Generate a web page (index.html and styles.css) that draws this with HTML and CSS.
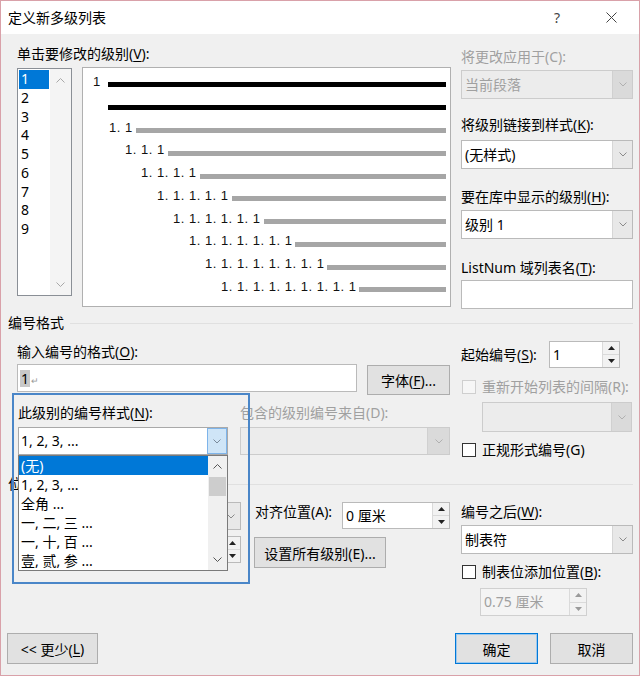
FILE: index.html
```html
<!DOCTYPE html>
<html lang="zh-CN">
<head>
<meta charset="utf-8">
<title>定义新多级列表</title>
<link rel="stylesheet" href="styles.css">
</head>
<body>
<div class="window">
  <div class="titlebar">
    <span class="title">定义新多级列表</span>
    <span class="tb-btn">?</span>
    <span class="tb-btn"><svg width="11" height="11" viewBox="0 0 11 11"><path d="M0.5 0.5L10.5 10.5M10.5 0.5L0.5 10.5" stroke="#444" stroke-width="1"/></svg></span>
  </div>

  <div class="content">
    <div class="top">
      <div class="top-left">
        <div class="lbl">单击要修改的级别(<u>V</u>):</div>
        <div class="top-row">
          <div class="levels">
            <div class="level-items">
              <div class="level selected">1</div>
              <div class="level">2</div>
              <div class="level">3</div>
              <div class="level">4</div>
              <div class="level">5</div>
              <div class="level">6</div>
              <div class="level">7</div>
              <div class="level">8</div>
              <div class="level">9</div>
            </div>
            <div class="lscroll">
              <svg width="9" height="5" viewBox="0 0 9 5"><path d="M0.5 4.5L4.5 0.5L8.5 4.5" fill="none" stroke="#a8a8a8"/></svg>
              <svg width="9" height="5" viewBox="0 0 9 5"><path d="M0.5 0.5L4.5 4.5L8.5 0.5" fill="none" stroke="#a8a8a8"/></svg>
            </div>
          </div>
          <div class="preview">
            <div class="pv-row lv1"><span class="num">1</span><i class="bar dark"></i></div>
            <div class="pv-row lv1b"><i class="bar dark"></i></div>
            <div class="pv-row lv2"><span class="num">1. 1</span><i class="bar"></i></div>
            <div class="pv-row lv3"><span class="num">1. 1. 1</span><i class="bar"></i></div>
            <div class="pv-row lv4"><span class="num">1. 1. 1. 1</span><i class="bar"></i></div>
            <div class="pv-row lv5"><span class="num">1. 1. 1. 1. 1</span><i class="bar"></i></div>
            <div class="pv-row lv6"><span class="num">1. 1. 1. 1. 1. 1</span><i class="bar"></i></div>
            <div class="pv-row lv7"><span class="num">1. 1. 1. 1. 1. 1. 1</span><i class="bar"></i></div>
            <div class="pv-row lv8"><span class="num">1. 1. 1. 1. 1. 1. 1. 1</span><i class="bar"></i></div>
            <div class="pv-row lv9"><span class="num">1. 1. 1. 1. 1. 1. 1. 1. 1</span><i class="bar"></i></div>
          </div>
        </div>
      </div>

      <div class="top-right">
        <div class="lbl dis apply-lbl">将更改应用于(C):</div>
        <div class="combo disabled apply-combo"><span class="val">当前段落</span><span class="cbtn"><svg width="8" height="5" viewBox="0 0 8 5"><path d="M0.5 0.5L4 4L7.5 0.5" fill="none" stroke="#b0b0b0"/></svg></span></div>
        <div class="lbl link-lbl">将级别链接到样式(<u>K</u>):</div>
        <div class="combo link-combo"><span class="val">(无样式)</span><span class="cbtn"><svg width="8" height="5" viewBox="0 0 8 5"><path d="M0.5 0.5L4 4L7.5 0.5" fill="none" stroke="#8a8a8a"/></svg></span></div>
        <div class="lbl gal-lbl">要在库中显示的级别(<u>H</u>):</div>
        <div class="combo gal-combo"><span class="val">级别 1</span><span class="cbtn"><svg width="8" height="5" viewBox="0 0 8 5"><path d="M0.5 0.5L4 4L7.5 0.5" fill="none" stroke="#8a8a8a"/></svg></span></div>
        <div class="lbl ln-lbl">ListNum 域列表名(<u>T</u>):</div>
        <div class="textbox ln-input"></div>
      </div>
    </div>

    <div class="group-head head-format"><span>编号格式</span><i class="rule"></i></div>

    <div class="sec sec1">
      <div class="sec1-left">
        <div class="lbl fmt-lbl">输入编号的格式(<u>O</u>):</div>
        <div class="fmt-row">
          <div class="textbox fmt-input"><span class="sel">1</span><span class="ret">↵</span></div>
          <div class="btn font-btn">字体(<u>F</u>)...</div>
        </div>
        <div class="two-col style-lbls">
          <div class="lbl">此级别的编号样式(<u>N</u>):</div>
          <div class="lbl dis">包含的级别编号来自(D):</div>
        </div>
        <div class="two-col style-combos">
          <div class="combo open style-combo"><span class="val">1, 2, 3, ...</span><span class="cbtn"><svg width="8" height="5" viewBox="0 0 8 5"><path d="M0.5 0.5L4 4L7.5 0.5" fill="none" stroke="#7a8a9a"/></svg></span></div>
          <div class="combo disabled from-combo"><span class="val"></span><span class="cbtn"><svg width="8" height="5" viewBox="0 0 8 5"><path d="M0.5 0.5L4 4L7.5 0.5" fill="none" stroke="#b0b0b0"/></svg></span></div>
        </div>
      </div>

      <div class="sec1-right">
        <div class="start-row">
          <span class="lbl start-lbl">起始编号(<u>S</u>):</span>
          <div class="spin start-spin"><span class="val">1</span><span class="sbtn"><span><svg width="7" height="4" viewBox="0 0 7 4"><path d="M0 4L3.5 0L7 4Z" fill="#222"/></svg></span><span><svg width="7" height="4" viewBox="0 0 7 4"><path d="M0 0L3.5 4L7 0Z" fill="#222"/></svg></span></span></div>
        </div>
        <div class="check dis restart-check"><i class="box"></i><span>重新开始列表的间隔(R):</span></div>
        <div class="combo disabled restart-combo"><span class="val"></span><span class="cbtn"><svg width="8" height="5" viewBox="0 0 8 5"><path d="M0.5 0.5L4 4L7.5 0.5" fill="none" stroke="#b0b0b0"/></svg></span></div>
        <div class="check legal-check"><i class="box"></i><span>正规形式编号(G)</span></div>
      </div>
    </div>

    <div class="group-head head-pos"><span class="pos-title">位</span><i class="rule"></i></div>

    <div class="sec sec2">
      <div class="pos-grid">
        <div class="combo pos-c1"><span class="val"></span><span class="cbtn"><svg width="8" height="5" viewBox="0 0 8 5"><path d="M0.5 0.5L4 4L7.5 0.5" fill="none" stroke="#8a8a8a"/></svg></span></div>
        <div class="lbl pos-l2">对齐位置(A):</div>
        <div class="spin pos-s1"><span class="val">0 厘米</span><span class="sbtn"><span><svg width="7" height="4" viewBox="0 0 7 4"><path d="M0 4L3.5 0L7 4Z" fill="#222"/></svg></span><span><svg width="7" height="4" viewBox="0 0 7 4"><path d="M0 0L3.5 4L7 0Z" fill="#222"/></svg></span></span></div>
        <div class="spin pos-s2"><span class="val"></span><span class="sbtn"><span><svg width="7" height="4" viewBox="0 0 7 4"><path d="M0 4L3.5 0L7 4Z" fill="#222"/></svg></span><span><svg width="7" height="4" viewBox="0 0 7 4"><path d="M0 0L3.5 4L7 0Z" fill="#222"/></svg></span></span></div>
        <div class="btn all-btn">设置所有级别(E)...</div>
      </div>

      <div class="sec2-right">
        <div class="lbl after-lbl">编号之后(<u>W</u>):</div>
        <div class="combo after-combo"><span class="val">制表符</span><span class="cbtn"><svg width="8" height="5" viewBox="0 0 8 5"><path d="M0.5 0.5L4 4L7.5 0.5" fill="none" stroke="#8a8a8a"/></svg></span></div>
        <div class="check tab-check"><i class="box"></i><span>制表位添加位置(<u>B</u>):</span></div>
        <div class="spin disabled tab-spin"><span class="val">0.75 厘米</span><span class="sbtn"><span><svg width="7" height="4" viewBox="0 0 7 4"><path d="M0 4L3.5 0L7 4Z" fill="#9a9a9a"/></svg></span><span><svg width="7" height="4" viewBox="0 0 7 4"><path d="M0 0L3.5 4L7 0Z" fill="#9a9a9a"/></svg></span></span></div>
      </div>
    </div>

    <div class="buttons">
      <div class="btn less-btn">&lt;&lt; 更少(<u>L</u>)</div>
      <div class="spacer"></div>
      <div class="btn ok-btn">确定</div>
      <div class="btn cancel-btn">取消</div>
    </div>
  </div>

  <div class="dropdown">
    <div class="dd-items">
      <div class="dd-item selected">(无)</div>
      <div class="dd-item">1, 2, 3, ...</div>
      <div class="dd-item">全角 ...</div>
      <div class="dd-item">一, 二, 三 ...</div>
      <div class="dd-item">一, 十, 百 ...</div>
      <div class="dd-item">壹, 贰, 参 ...</div>
    </div>
    <div class="dd-scroll">
      <div class="dd-arrow"><svg width="9" height="5" viewBox="0 0 9 5"><path d="M0.5 4.5L4.5 0.5L8.5 4.5" fill="none" stroke="#555"/></svg></div>
      <div class="dd-thumb"></div>
      <div class="dd-track"></div>
      <div class="dd-arrow"><svg width="9" height="5" viewBox="0 0 9 5"><path d="M0.5 0.5L4.5 4.5L8.5 0.5" fill="none" stroke="#555"/></svg></div>
    </div>
  </div>

  <div class="annot"></div>
</div>
</body>
</html>
```

FILE: styles.css
```css
* { box-sizing: border-box; }
html, body { margin: 0; padding: 0; background: #fff; }
body {
  font-family: "Noto Sans", "Noto Sans CJK SC", sans-serif;
  font-size: 14px;
  color: #000;
}
u { text-decoration: underline; text-decoration-thickness: 1px; text-underline-offset: 2px; }

.window {
  position: relative;
  width: 640px;
  height: 676px;
  border: 1px solid #d9a1a9;
  background: #f0f0f0;
  overflow: hidden;
}

/* title bar */
.titlebar {
  height: 33px;
  background: #fff;
  display: flex;
  align-items: center;
  padding-left: 7px;
  padding-right: 5px;
}
.title { flex: 1; line-height: 20px; }
.tb-btn {
  width: 46px;
  display: flex;
  justify-content: center;
  align-items: center;
  color: #444;
  font-size: 14px;
}
.tb-btn + .tb-btn { margin-left: 8px; }

.content { display: flex; flex-direction: column; }

.lbl { line-height: 20px; height: 20px; white-space: nowrap; }
.dis { color: #a0a0a0; }

/* top */
.top { display: flex; padding-left: 16px; }
.top-left { width: 434px; margin-top: 10px; }
.top-row { display: flex; align-items: flex-start; margin-top: 3px; }
.levels {
  width: 55px;
  height: 228px;
  margin-top: 1px;
  border: 1px solid #8a8f96;
  background: #fff;
  display: flex;
}
.level-items { width: 32px; padding: 1px; }
.level { height: 18.75px; line-height: 18.75px; padding-left: 2px; }
.level.selected { background: #0078d7; color: #fff; }
.lscroll {
  flex: 1;
  background: #f4f4f4;
  display: flex;
  flex-direction: column;
  justify-content: space-between;
  align-items: center;
  padding: 9px 0 8px;
}
.preview {
  width: 369px;
  height: 240px;
  margin-left: 10px;
  border: 1px solid #b0b0b0;
  background: #fff;
  padding-top: 5.6px;
  padding-right: 4px;
}
.pv-row { height: 22.78px; display: flex; align-items: center; }
.num {
  font-family: "Liberation Sans", sans-serif;
  font-size: 13px;
  letter-spacing: 0.5px;
  white-space: pre;
  line-height: 14px;
  margin-bottom: 6px;
  color: #111;
}
.bar { flex: 1; height: 5px; background: #a6a6a6; margin-left: 3px; }
.bar.dark { background: #000; }
.lv1 { padding-left: 10px; }
.lv1 .bar { margin-left: 7px; }
.lv1b { padding-left: 25px; }
.lv1b .bar { margin-left: 0; }
.lv2 { padding-left: 26px; }
.lv3 { padding-left: 42px; }
.lv4 { padding-left: 58px; }
.lv5 { padding-left: 74px; }
.lv6 { padding-left: 90px; }
.lv7 { padding-left: 106px; }
.lv8 { padding-left: 122px; }
.lv9 { padding-left: 138px; }

.top-right { width: 172px; margin-left: 10px; display: flex; flex-direction: column; }
.apply-lbl { margin-top: 13px; }
.apply-combo { margin-top: 3px; }
.link-lbl { margin-top: 16px; }
.link-combo { margin-top: 5px; }
.gal-lbl { margin-top: 18px; }
.gal-combo { margin-top: 3px; }
.ln-lbl { margin-top: 19px; }
.ln-input { margin-top: 2px; height: 29px; }

/* controls */
.combo {
  display: flex;
  height: 29px;
  border: 1px solid #bababa;
  background: #fff;
}
.combo .val { flex: 1; padding-left: 3px; line-height: 27px; white-space: nowrap; overflow: hidden; }
.combo .cbtn {
  width: 20px;
  background: #e8e8e8;
  border-left: 1px solid #d6d6d6;
  display: flex;
  align-items: center;
  justify-content: center;
}
.combo.disabled { background: #ececec; border-color: #cccccc; color: #a0a0a0; }
.combo.disabled .cbtn { background: #dadada; border-left-color: #d0d0d0; }
.combo.open { border-color: #a9a9a9; }
.combo.open .cbtn { background: #cfe5f7; border: 1px solid #7eb4ea; }

.textbox { border: 1px solid #bababa; background: #fff; }

.spin { display: flex; height: 27px; border: 1px solid #bababa; background: #fff; }
.spin .val { flex: 1; padding-left: 3px; line-height: 25px; white-space: nowrap; overflow: hidden; }
.spin .sbtn { width: 17px; display: flex; flex-direction: column; border-left: 1px solid #dadada; }
.spin .sbtn > span {
  flex: 1;
  display: flex;
  align-items: center;
  justify-content: center;
  background: #f2f2f2;
}
.spin .sbtn > span:first-child { border-bottom: 1px solid #dadada; }
.spin.disabled { background: #f4f4f4; border-color: #d0d0d0; color: #a0a0a0; }

.btn {
  height: 31px;
  border: 1px solid #adadad;
  background: #e1e1e1;
  display: flex;
  align-items: center;
  justify-content: center;
  white-space: nowrap;
}

.check { display: flex; align-items: center; height: 20px; line-height: 20px; white-space: nowrap; }
.check .box {
  width: 14px;
  height: 14px;
  border: 1px solid #333;
  background: #fff;
  margin-left: 1px;
  margin-right: 6px;
}
.check.dis .box { border-color: #cfcfcf; background: #f6f6f6; }

/* group heads */
.group-head {
  display: flex;
  align-items: center;
  height: 20px;
  line-height: 20px;
  padding-left: 7px;
  padding-right: 6px;
}
.group-head .rule { flex: 1; height: 1px; background: #e0e0e0; margin-left: 6px; }
.head-format { margin-top: 4px; }
.head-pos { margin-top: 14px; }
.pos-title { width: 28px; }

/* section 1 */
.sec { display: grid; grid-template-columns: 434px 172px; column-gap: 10px; padding-left: 16px; }
.sec1 { height: 127px; }
.fmt-lbl { margin-top: 9px; }
.fmt-row { display: flex; align-items: flex-start; margin-top: 2px; height: 31px; }
.fmt-input { width: 340px; height: 28px; padding-left: 2px; display: flex; align-items: center; }
.fmt-input .sel { background: #c8c8c8; line-height: 17px; padding: 0 1px; }
.fmt-input .ret { font-size: 9px; color: #999; margin-left: 1px; margin-top: 5px; }
.font-btn { width: 83px; height: 30px; margin-left: 10px; margin-top: 1px; }
.two-col { display: grid; grid-template-columns: 223px 211px; }
.style-lbls { margin-top: 8px; }
.style-lbls .lbl:first-child { padding-left: 1px; }
.style-combos { margin-top: 4px; }
.style-combo { margin-left: 1px; width: 210px; height: 28px; }
.style-combo .val { line-height: 26px; padding-left: 2px; }
.from-combo { width: 210px; height: 28px; }
.from-combo .cbtn { width: 22px; }

.start-row { display: flex; align-items: center; margin-top: 8px; height: 27px; }
.start-lbl { width: 88px; }
.start-spin { width: 71px; }
.restart-check { margin-top: 9px; }
.restart-combo { margin-top: 5px; margin-left: 21px; width: 150px; height: 30px; }
.legal-check { margin-top: 8px; }

/* section 2 */
.sec2 { height: 122px; }
.pos-grid {
  display: grid;
  grid-template-columns: 123px 101px 13px 88px 108px;
  grid-template-rows: 28px 32px;
  row-gap: 6px;
  margin-top: 8px;
  align-items: start;
}
.pos-c1 { grid-column: 2; grid-row: 1; height: 28px; }
.pos-l2 { grid-column: 4; grid-row: 1; margin-top: 0; padding-left: 1px; }
.pos-s1 { grid-column: 5; grid-row: 1; height: 27px; }
.pos-s2 { grid-column: 2; grid-row: 2; height: 27px; }
.all-btn { grid-column: 4 / 6; grid-row: 2; width: 132px; margin-top: 1px; }

.sec2-right { display: flex; flex-direction: column; }
.after-lbl { margin-top: 8px; }
.after-combo { margin-top: 3px; }
.tab-check { margin-top: 8px; }
.tab-spin { margin-top: 6px; margin-left: 19px; width: 107px; height: 28px; }
.tab-spin .val { line-height: 26px; }

/* buttons */
.buttons { display: flex; margin-top: 17px; padding: 0 6px 0 6px; }
.spacer { flex: 1; }
.less-btn { width: 91px; }
.ok-btn { width: 83px; border-color: #0078d7; box-shadow: inset 0 0 0 1px #9cc8ee; }
.cancel-btn { width: 83px; margin-left: 12px; }

/* dropdown overlay */
.dropdown {
  position: absolute;
  left: 17px;
  top: 454px;
  width: 210px;
  height: 116px;
  border: 1px solid #7a7a7a;
  background: #fff;
  display: flex;
  z-index: 2;
}
.dd-items { flex: 1; }
.dd-item { height: 19px; line-height: 19px; padding-left: 2px; white-space: nowrap; }
.dd-item.selected { background: #0078d7; color: #fff; }
.dd-scroll { width: 19px; background: #f0f0f0; display: flex; flex-direction: column; }
.dd-arrow { height: 21px; display: flex; align-items: center; justify-content: center; }
.dd-thumb { height: 19px; background: #cdcdcd; margin: 0 1px; }
.dd-track { flex: 1; }

/* annotation frame */
.annot {
  position: absolute;
  left: 11px;
  top: 392px;
  width: 238px;
  height: 191px;
  border: 2px solid #4a86c8;
  z-index: 3;
}
```
